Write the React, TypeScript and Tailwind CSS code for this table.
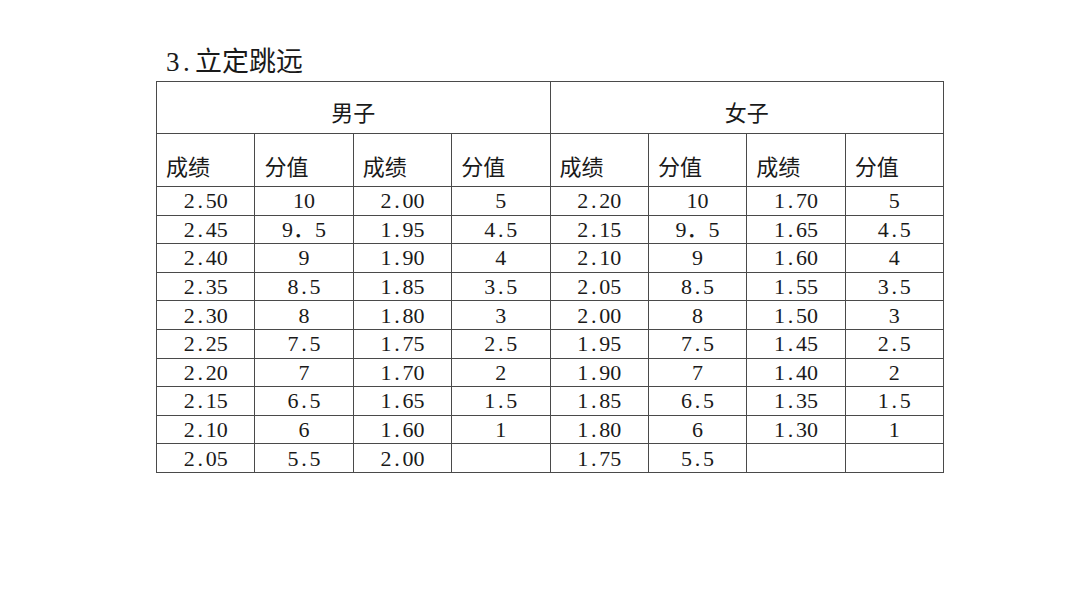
const serif = { fontFamily: '"Liberation Serif", "Noto Sans CJK SC", serif' };

const male = [
  ["2.50", "10", "2.00", "5"],
  ["2.45", "9．5", "1.95", "4.5"],
  ["2.40", "9", "1.90", "4"],
  ["2.35", "8.5", "1.85", "3.5"],
  ["2.30", "8", "1.80", "3"],
  ["2.25", "7.5", "1.75", "2.5"],
  ["2.20", "7", "1.70", "2"],
  ["2.15", "6.5", "1.65", "1.5"],
  ["2.10", "6", "1.60", "1"],
  ["2.05", "5.5", "2.00", ""],
];

const female = [
  ["2.20", "10", "1.70", "5"],
  ["2.15", "9．5", "1.65", "4.5"],
  ["2.10", "9", "1.60", "4"],
  ["2.05", "8.5", "1.55", "3.5"],
  ["2.00", "8", "1.50", "3"],
  ["1.95", "7.5", "1.45", "2.5"],
  ["1.90", "7", "1.40", "2"],
  ["1.85", "6.5", "1.35", "1.5"],
  ["1.80", "6", "1.30", "1"],
  ["1.75", "5.5", "", ""],
];

// half-width glyph boxes, like a SimSun-style document font
function Num({ text }: { text: string }) {
  return (
    <span className="inline-flex">
      {text.split("").map((ch, i) =>
        ch.charCodeAt(0) > 255 ? (
          <span key={i} className="inline-block w-[1em] text-left">
            {ch}
          </span>
        ) : (
          <span key={i} className="inline-block w-[0.5em] text-center">
            {ch}
          </span>
        )
      )}
    </span>
  );
}

const heads = ["成绩", "分值", "成绩", "分值", "成绩", "分值", "成绩", "分值"];

export default function App() {
  return (
    <div className="w-[1080px] h-[599px] bg-white text-[#1a1a1a]" style={serif}>
      <div className="pl-[166px] pt-[49px] text-[27px] leading-none flex items-end">
        <Num text="3." />
        <span className="ml-[2px]">立定跳远</span>
      </div>

      <table className="ml-[156px] mt-[5px] w-[788px] table-fixed border-collapse text-[22px] leading-none">
        <tbody>
          <tr>
            <td colSpan={4} className="h-[52px] border border-[#4a4a4a] text-center align-top pt-[21px]">
              男子
            </td>
            <td colSpan={4} className="h-[52px] border border-[#4a4a4a] text-center align-top pt-[21px]">
              女子
            </td>
          </tr>
          <tr>
            {heads.map((h, i) => (
              <td key={i} className="h-[53px] border border-[#4a4a4a] text-left align-top pl-[9px] pt-[23px]">
                {h}
              </td>
            ))}
          </tr>
          {male.map((row, r) => (
            <tr key={r}>
              {[...row, ...female[r]].map((v, i) => (
                <td key={i} className="h-[28.6px] border border-[#4a4a4a] text-center align-middle p-0 pt-[1px]">
                  <Num text={v} />
                </td>
              ))}
            </tr>
          ))}
        </tbody>
      </table>
    </div>
  );
}
